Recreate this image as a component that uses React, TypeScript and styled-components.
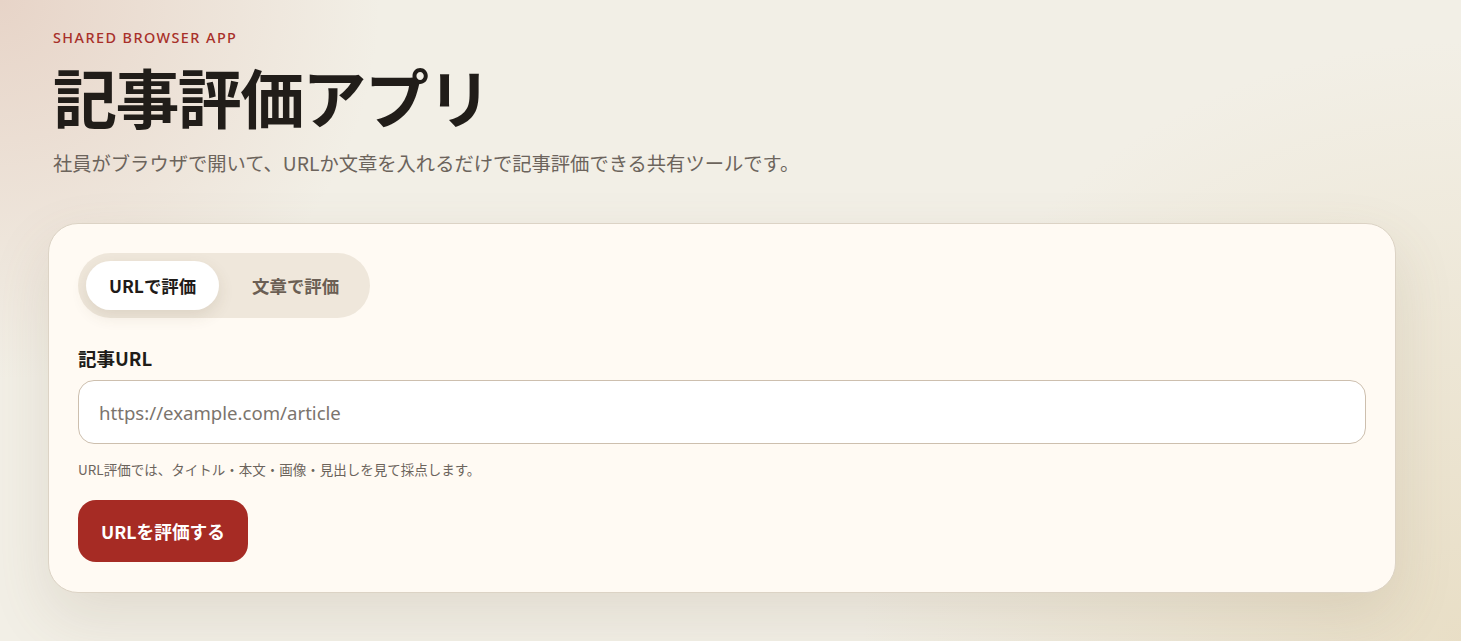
import React, { useState } from "react";
import styled, { createGlobalStyle } from "styled-components";

const GlobalStyle = createGlobalStyle`
  html, body { margin: 0; padding: 0; }
  body {
    min-height: 641px;
    font-family: "Noto Sans CJK JP", "Noto Sans", sans-serif;
    color: #221e1a;
    background:
      radial-gradient(circle at 0% 0%, rgba(222, 190, 175, 0.55) 0px, rgba(222, 190, 175, 0) 380px),
      radial-gradient(circle at 100% 100%, rgba(230, 218, 190, 0.8) 0px, rgba(230, 218, 190, 0) 600px),
      #f2efe6;
  }
  * { box-sizing: border-box; }
`;

const Page = styled.main`
  padding: 28px 65px 48px 48px;
  display: flex;
  flex-direction: column;
`;

const Header = styled.header`
  padding: 0 5px;
  display: flex;
  flex-direction: column;
`;

const Eyebrow = styled.div`
  font-family: "Noto Sans", "Open Sans", sans-serif;
  font-size: 14.4px;
  font-weight: 500;
  letter-spacing: 0.1em;
  color: #a8302a;
  line-height: 20px;
`;

const Title = styled.h1`
  margin: 7px 0 0;
  font-family: "Noto Sans CJK JP", sans-serif;
  font-size: 64px;
  font-weight: 700;
  letter-spacing: -0.025em;
  line-height: 80px;
  color: #211d19;
`;

const Subtitle = styled.p`
  margin: 14px 0 0;
  font-size: 19.3px;
  line-height: 28px;
  color: #6c645c;
`;

const Card = styled.section`
  margin-top: 46px;
  background: #fffaf3;
  border: 1px solid #dcd3c5;
  border-radius: 30px;
  padding: 29px 29px 30px;
  box-shadow: 0 24px 60px rgba(120, 100, 70, 0.14);
  display: flex;
  flex-direction: column;
  align-items: flex-start;
`;

const Tabs = styled.div`
  display: flex;
  gap: 10px;
  padding: 8px;
  border-radius: 999px;
  background: #efe7db;
`;

const Tab = styled.button<{ $active: boolean }>`
  border: 0;
  cursor: pointer;
  height: 49px;
  padding: 0 23px;
  border-radius: 999px;
  font-family: "Noto Sans CJK JP", sans-serif;
  font-size: 17.4px;
  font-weight: 700;
  background: ${(p) => (p.$active ? "#ffffff" : "transparent")};
  color: ${(p) => (p.$active ? "#1f1b18" : "#6b5f54")};
  box-shadow: ${(p) => (p.$active ? "0 6px 16px rgba(90, 70, 40, 0.12)" : "none")};
`;

const Label = styled.label`
  margin-top: 27px;
  font-size: 18.5px;
  font-weight: 700;
  line-height: 26px;
  color: #201c18;
`;

const Input = styled.input`
  margin-top: 9px;
  width: 100%;
  height: 64px;
  border: 1px solid #cdbfae;
  border-radius: 16px;
  background: #ffffff;
  padding: 0 20px;
  font-family: "Noto Sans", "Open Sans", sans-serif;
  font-size: 18.6px;
  color: #221e1a;
  outline: none;
  &::placeholder { color: #7b746d; }
`;

const Hint = styled.p`
  margin: 15px 0 0;
  font-size: 13.5px;
  line-height: 20px;
  color: #6c645c;
`;

const Submit = styled.button`
  margin-top: 21px;
  height: 62px;
  padding: 0 23px;
  border: 0;
  border-radius: 18px;
  background: #a62b24;
  color: #ffffff;
  font-family: "Noto Sans CJK JP", sans-serif;
  font-size: 17.7px;
  font-weight: 700;
  cursor: pointer;
`;

export default function App() {
  const [mode, setMode] = useState<"url" | "text">("url");
  return (
    <>
      <GlobalStyle />
      <Page>
        <Header>
          <Eyebrow>SHARED BROWSER APP</Eyebrow>
          <Title>記事評価アプリ</Title>
          <Subtitle>社員がブラウザで開いて、URLか文章を入れるだけで記事評価できる共有ツールです。</Subtitle>
        </Header>
        <Card>
          <Tabs>
            <Tab $active={mode === "url"} onClick={() => setMode("url")}>URLで評価</Tab>
            <Tab $active={mode === "text"} onClick={() => setMode("text")}>文章で評価</Tab>
          </Tabs>
          <Label htmlFor="article-url">記事URL</Label>
          <Input id="article-url" placeholder="https://example.com/article" />
          <Hint>URL評価では、タイトル・本文・画像・見出しを見て採点します。</Hint>
          <Submit>URLを評価する</Submit>
        </Card>
      </Page>
    </>
  );
}
